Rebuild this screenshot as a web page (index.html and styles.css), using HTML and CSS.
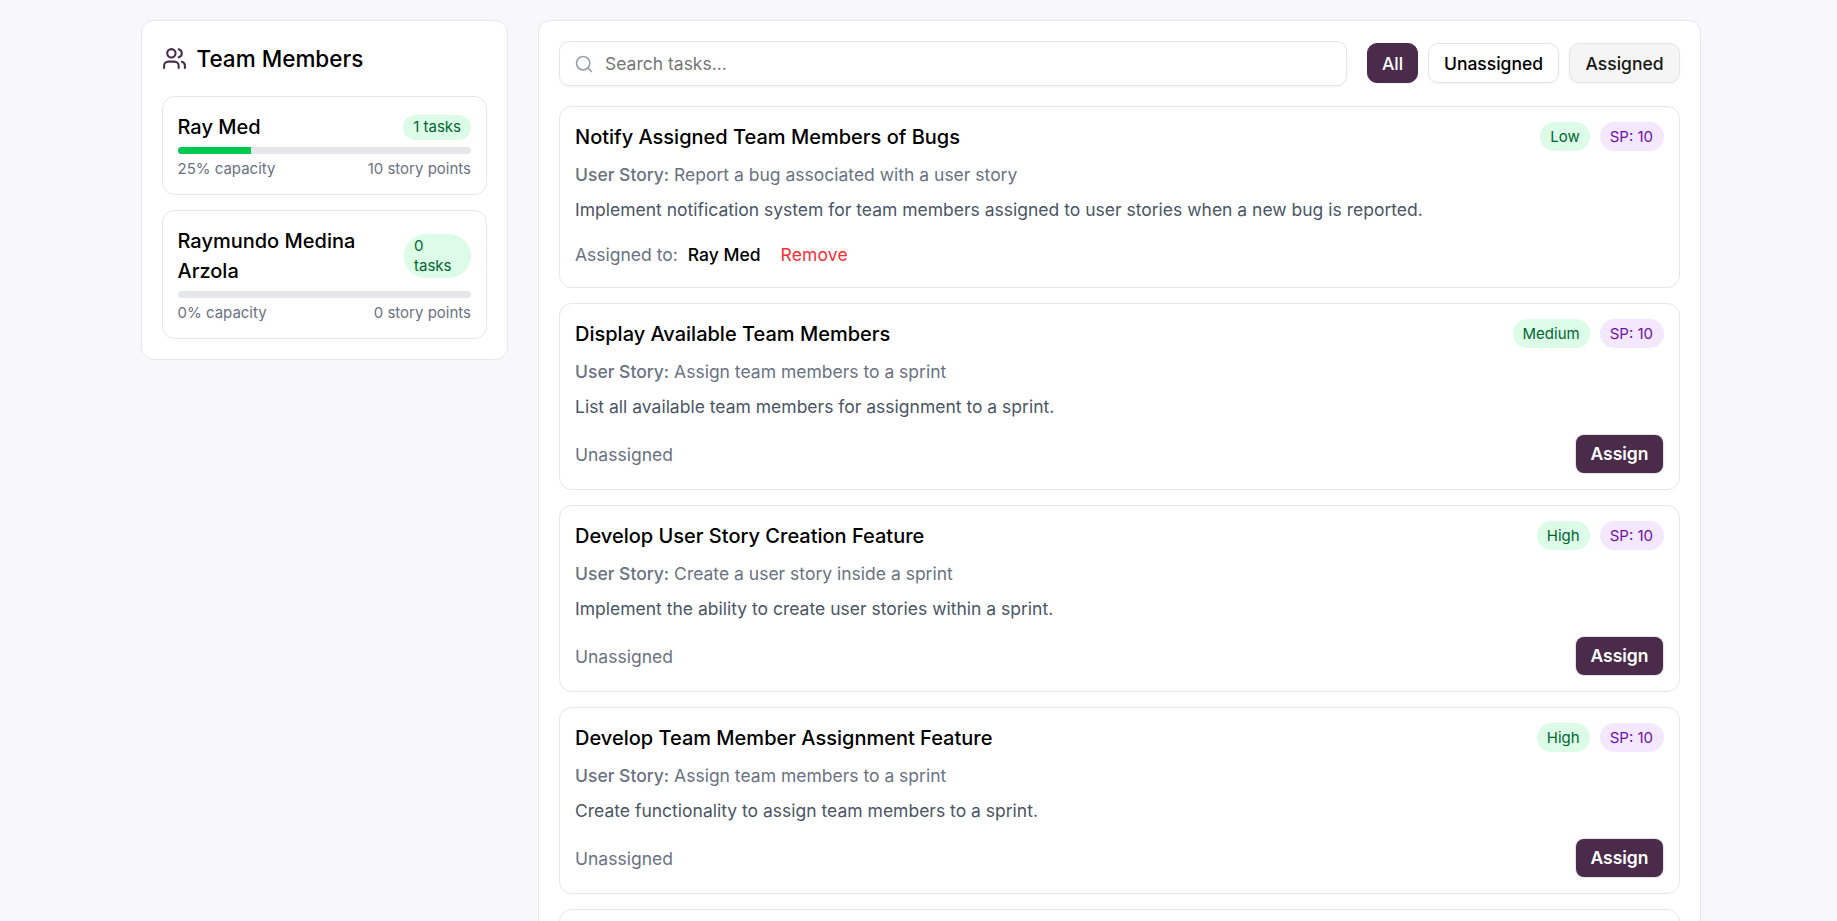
FILE: index.html
```html
<!DOCTYPE html>
<html lang="en">
<head>
<meta charset="utf-8">
<title>Team Members</title>
<link rel="stylesheet" href="styles.css">
</head>
<body>
<div class="page">
  <aside class="panel team">
    <h2 class="team-title">
      <svg class="icon-users" viewBox="0 0 24 24" fill="none" stroke="currentColor" stroke-width="2" stroke-linecap="round" stroke-linejoin="round"><path d="M16 21v-2a4 4 0 0 0-4-4H6a4 4 0 0 0-4 4v2"/><circle cx="9" cy="7" r="4"/><path d="M22 21v-2a4 4 0 0 0-3-3.87"/><path d="M16 3.13a4 4 0 0 1 0 7.75"/></svg>
      <span>Team Members</span>
    </h2>
    <div class="member">
      <div class="member-head"><h3 class="member-name">Ray Med</h3><span class="count">1 tasks</span></div>
      <div class="bar"><div class="bar-fill" style="width:25%"></div></div>
      <div class="member-foot"><span>25% capacity</span><span>10 story points</span></div>
    </div>
    <div class="member">
      <div class="member-head"><h3 class="member-name">Raymundo Medina Arzola</h3><span class="count count-narrow">0 tasks</span></div>
      <div class="bar"><div class="bar-fill" style="width:0%"></div></div>
      <div class="member-foot"><span>0% capacity</span><span>0 story points</span></div>
    </div>
  </aside>
  <main class="panel board">
    <div class="toolbar">
      <label class="search">
        <svg class="icon-search" viewBox="0 0 24 24" fill="none" stroke="currentColor" stroke-width="2" stroke-linecap="round" stroke-linejoin="round"><circle cx="11" cy="11" r="8"/><path d="m21 21-4.3-4.3"/></svg>
        <input class="search-input" type="text" placeholder="Search tasks...">
      </label>
      <div class="filters">
        <button class="filter filter-active">All</button>
        <button class="filter filter-unassigned">Unassigned</button>
        <button class="filter filter-hover">Assigned</button>
      </div>
    </div>
    <div class="tasks">
      <article class="task">
        <div class="task-head"><h3 class="task-title">Notify Assigned Team Members of Bugs</h3><div class="tags"><span class="tag">Low</span><span class="tag tag-points">SP: 10</span></div></div>
        <p class="story"><span class="story-label">User Story:</span> Report a bug associated with a user story</p>
        <p class="desc">Implement notification system for team members assigned to user stories when a new bug is reported.</p>
        <div class="task-foot task-foot-assigned"><span class="muted">Assigned to:</span><span class="assignee">Ray Med</span><button class="remove">Remove</button></div>
      </article>
      <article class="task">
        <div class="task-head"><h3 class="task-title">Display Available Team Members</h3><div class="tags"><span class="tag">Medium</span><span class="tag tag-points">SP: 10</span></div></div>
        <p class="story"><span class="story-label">User Story:</span> Assign team members to a sprint</p>
        <p class="desc">List all available team members for assignment to a sprint.</p>
        <div class="task-foot"><span class="muted">Unassigned</span><button class="assign">Assign</button></div>
      </article>
      <article class="task">
        <div class="task-head"><h3 class="task-title">Develop User Story Creation Feature</h3><div class="tags"><span class="tag">High</span><span class="tag tag-points">SP: 10</span></div></div>
        <p class="story"><span class="story-label">User Story:</span> Create a user story inside a sprint</p>
        <p class="desc">Implement the ability to create user stories within a sprint.</p>
        <div class="task-foot"><span class="muted">Unassigned</span><button class="assign">Assign</button></div>
      </article>
      <article class="task">
        <div class="task-head"><h3 class="task-title">Develop Team Member Assignment Feature</h3><div class="tags"><span class="tag">High</span><span class="tag tag-points">SP: 10</span></div></div>
        <p class="story"><span class="story-label">User Story:</span> Assign team members to a sprint</p>
        <p class="desc">Create functionality to assign team members to a sprint.</p>
        <div class="task-foot"><span class="muted">Unassigned</span><button class="assign">Assign</button></div>
      </article>
      <article class="task task-next"></article>
    </div>
  </main>
</div>
</body>
</html>
```

FILE: styles.css
```css
* { box-sizing: border-box; margin: 0; }
body {
  height: 921px;
  overflow: hidden;
  background: #f8f8fb;
  color: #000;
  font-family: Inter, sans-serif;
  font-size: 17.5px;
  line-height: 25px;
}
h2, h3 { font-weight: 500; }
button, input { font: inherit; }
.page {
  display: grid;
  grid-template-columns: 367px 1163px;
  gap: 30px;
  align-items: start;
  padding: 20px 0 0 141px;
}
.panel {
  padding: 20px;
  background: #fff;
  border: 1px solid #e5e7eb;
  border-radius: 12.5px;
}
.team { display: flex; flex-direction: column; gap: 15px; }
.team-title {
  display: flex;
  align-items: center;
  gap: 9.5px;
  height: 35px;
  margin-bottom: 5px;
  font-size: 22.5px;
  line-height: 35px;
}
.icon-users { width: 25px; height: 25px; color: #4a2b4a; }
.member {
  padding: 15px 15px 15px 14.5px;
  border: 1px solid #e5e7eb;
  border-radius: 12.5px;
}
.member-head {
  display: flex;
  justify-content: space-between;
  align-items: center;
  margin-bottom: 5px;
}
.member-name { font-size: 20px; line-height: 30px; }
.count {
  flex: none;
  padding: 2.5px 10px;
  border-radius: 30px;
  background: #dcfce7;
  color: #016630;
  font-size: 15px;
  line-height: 20px;
}
.count-narrow { width: 67px; padding: 2px 10px; }
.bar {
  height: 7px;
  overflow: hidden;
  border-radius: 7px;
  background: #e5e7eb;
}
.bar-fill { height: 100%; background: #00c950; }
.member-foot {
  display: flex;
  justify-content: space-between;
  margin-top: 5px;
  color: #6a7282;
  font-size: 15px;
  line-height: 20px;
}
.board { height: 1100px; }
.toolbar { display: flex; align-items: center; gap: 20px; margin-bottom: 20px; }
.search {
  display: flex;
  flex: 1;
  align-items: center;
  gap: 11px;
  height: 45px;
  padding: 0 14px;
  border: 1px solid #e5e5e5;
  border-radius: 10px;
  box-shadow: 0 1px 2px rgb(0 0 0 / 5%);
}
.icon-search { width: 20px; height: 20px; color: #99a1af; }
.search-input {
  flex: 1;
  padding: 0;
  border: 0;
  outline: 0;
  background: transparent;
}
.search-input::placeholder { color: #757575; }
.filters { display: flex; gap: 10px; margin-bottom: 1px; }
.filter {
  width: 111px;
  height: 40px;
  padding: 0;
  border: 1px solid #e5e5e5;
  border-radius: 10px;
  background: #fff;
  box-shadow: 0 1px 2px rgb(0 0 0 / 5%);
  color: #000;
  font-weight: 500;
}
.filter-active { width: 51px; border-color: #4a2b4a; background: #4a2b4a; color: #fff; }
.filter-unassigned { width: 131px; }
.filter-hover { background: #f5f5f5; color: #171717; }
.tasks { display: flex; flex-direction: column; gap: 15px; }
.task {
  padding: 15px;
  border: 1px solid #e5e7eb;
  border-radius: 12.5px;
}
.task-next { height: 187px; }
.task-head {
  display: flex;
  justify-content: space-between;
  align-items: flex-start;
  height: 30px;
}
.task-title { font-size: 20px; line-height: 30px; }
.tags { display: flex; gap: 10px; }
.tag {
  padding: 4.5px 10px;
  border-radius: 15px;
  background: #dcfce7;
  color: #016630;
  font-size: 15px;
  line-height: 20px;
}
.tag-points { padding-right: 11px; background: #f3e8ff; color: #6e11b0; }
.story { margin-top: 10px; color: #6a7282; }
.story-label { font-weight: 500; }
.desc { margin-top: 10px; color: #4a5565; }
.muted { color: #6a7282; }
.task-foot {
  display: flex;
  justify-content: space-between;
  align-items: center;
  margin-top: 15px;
  height: 40px;
}
.task-foot-assigned { justify-content: flex-start; height: 35px; }
.assignee { margin-left: 10px; font-weight: 500; }
.remove {
  margin-left: 20px;
  padding: 0;
  border: 0;
  background: none;
  color: #fb2c36;
  letter-spacing: 0.15px;
}
.assign {
  width: 87px;
  height: 38px;
  margin: 0 1px 1px 0;
  padding: 0;
  border: 0;
  border-radius: 8px;
  background: #4a2b4a;
  box-shadow: 0 0 1px 1px rgb(74 43 74 / 15%);
  color: #fff;
  font-weight: 600;
}
```
